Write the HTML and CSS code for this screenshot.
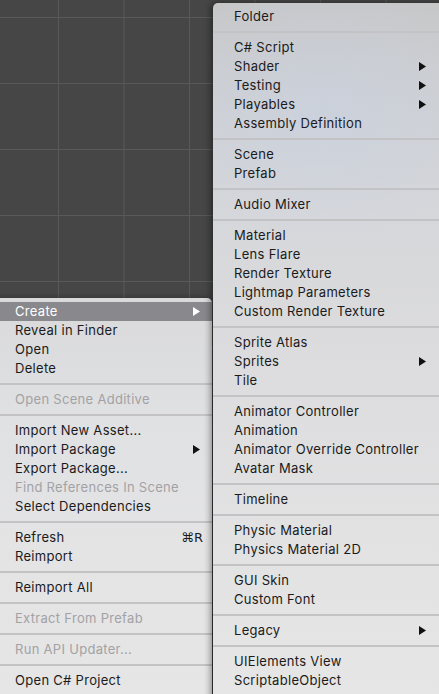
FILE: index.html
```html
<!DOCTYPE html>
<html>
<head>
<meta charset="utf-8">
<link rel="stylesheet" href="styles.css">
</head>
<body>
<div class="scene">
  <div class="menu menu-left">
    <div class="item active"><span>Create</span><svg class="arrow" viewBox="0 0 7 9"><polygon points="0,0 7,4.5 0,9"/></svg></div>
    <div class="item"><span>Reveal in Finder</span></div>
    <div class="item"><span>Open</span></div>
    <div class="item"><span>Delete</span></div>
    <div class="sep"></div>
    <div class="item disabled"><span>Open Scene Additive</span></div>
    <div class="sep"></div>
    <div class="item"><span>Import New Asset...</span></div>
    <div class="item"><span>Import Package</span><svg class="arrow" viewBox="0 0 7 9"><polygon points="0,0 7,4.5 0,9"/></svg></div>
    <div class="item"><span>Export Package...</span></div>
    <div class="item disabled"><span>Find References In Scene</span></div>
    <div class="item"><span>Select Dependencies</span></div>
    <div class="sep"></div>
    <div class="item"><span>Refresh</span><span class="shortcut">⌘R</span></div>
    <div class="item"><span>Reimport</span></div>
    <div class="sep"></div>
    <div class="item"><span>Reimport All</span></div>
    <div class="sep"></div>
    <div class="item disabled"><span>Extract From Prefab</span></div>
    <div class="sep"></div>
    <div class="item disabled"><span>Run API Updater...</span></div>
    <div class="sep"></div>
    <div class="item"><span>Open C# Project</span></div>
  </div>
  <div class="menu menu-right">
    <div class="item"><span>Folder</span></div>
    <div class="sep"></div>
    <div class="item"><span>C# Script</span></div>
    <div class="item"><span>Shader</span><svg class="arrow" viewBox="0 0 7 9"><polygon points="0,0 7,4.5 0,9"/></svg></div>
    <div class="item"><span>Testing</span><svg class="arrow" viewBox="0 0 7 9"><polygon points="0,0 7,4.5 0,9"/></svg></div>
    <div class="item"><span>Playables</span><svg class="arrow" viewBox="0 0 7 9"><polygon points="0,0 7,4.5 0,9"/></svg></div>
    <div class="item"><span>Assembly Definition</span></div>
    <div class="sep"></div>
    <div class="item"><span>Scene</span></div>
    <div class="item"><span>Prefab</span></div>
    <div class="sep"></div>
    <div class="item"><span>Audio Mixer</span></div>
    <div class="sep"></div>
    <div class="item"><span>Material</span></div>
    <div class="item"><span>Lens Flare</span></div>
    <div class="item"><span>Render Texture</span></div>
    <div class="item"><span>Lightmap Parameters</span></div>
    <div class="item"><span>Custom Render Texture</span></div>
    <div class="sep"></div>
    <div class="item"><span>Sprite Atlas</span></div>
    <div class="item"><span>Sprites</span><svg class="arrow" viewBox="0 0 7 9"><polygon points="0,0 7,4.5 0,9"/></svg></div>
    <div class="item"><span>Tile</span></div>
    <div class="sep"></div>
    <div class="item"><span>Animator Controller</span></div>
    <div class="item"><span>Animation</span></div>
    <div class="item"><span>Animator Override Controller</span></div>
    <div class="item"><span>Avatar Mask</span></div>
    <div class="sep"></div>
    <div class="item"><span>Timeline</span></div>
    <div class="sep"></div>
    <div class="item"><span>Physic Material</span></div>
    <div class="item"><span>Physics Material 2D</span></div>
    <div class="sep"></div>
    <div class="item"><span>GUI Skin</span></div>
    <div class="item"><span>Custom Font</span></div>
    <div class="sep"></div>
    <div class="item"><span>Legacy</span><svg class="arrow" viewBox="0 0 7 9"><polygon points="0,0 7,4.5 0,9"/></svg></div>
    <div class="sep"></div>
    <div class="item"><span>UIElements View</span></div>
    <div class="item"><span>ScriptableObject</span></div>
  </div>
</div>
</body>
</html>
```
FILE: styles.css
```css
html, body {
  margin: 0;
  padding: 0;
  width: 439px;
  height: 694px;
  overflow: hidden;
}
body {
  font-family: "Inter", "Liberation Sans", sans-serif;
  font-size: 13px;
  letter-spacing: 0.3px;
  color: #1b1b1b;
}
.scene {
  position: relative;
  width: 439px;
  height: 694px;
  background-color: #464646;
  background-image:
    linear-gradient(to right, #595959 1px, transparent 1px),
    linear-gradient(to bottom, #595959 1px, transparent 1px);
  background-size: 65.5px 66px;
  background-position: 58px 17px;
  overflow: hidden;
}
.menu {
  position: absolute;
  box-sizing: border-box;
  padding: 4px 0;
  border-radius: 5px;
}
.menu-left {
  left: -6px;
  top: 298px;
  width: 218px;
  height: 420px;
  background: linear-gradient(to bottom, #d9d9da 0%, #e0e1e3 30%, #e4e4e5 60%, #e6e6e6 100%);
  box-shadow: 0 0 6px rgba(0,0,0,0.35);
}
.menu-right {
  left: 213px;
  top: 3px;
  width: 240px;
  height: 700px;
  background:
    radial-gradient(ellipse 180px 140px at 110px 110px, rgba(200,210,228,0.55), rgba(200,210,228,0) 100%),
    linear-gradient(to bottom, #c7c7c8 0%, #cfd0d2 15%, #d6d7da 30%, #dcdcde 50%, #e2e2e3 75%, #e6e6e6 100%);
  box-shadow: -2px 0 7px rgba(0,0,0,0.45);
}
.item {
  height: 19px;
  line-height: 19px;
  display: flex;
  align-items: center;
  justify-content: space-between;
  white-space: nowrap;
}
.menu-left .item {
  padding: 0 12px 0 21px;
}
.menu-right .item {
  padding: 0 27px 0 21px;
}
.item.active {
  background: #88888d;
  color: #ffffff;
}
.item.active .arrow {
  fill: #ffffff;
}
.item.disabled {
  color: #a2a2a4;
}
.arrow {
  width: 7px;
  height: 9px;
  fill: #111111;
  flex: none;
}
.shortcut {
  font-family: "DejaVu Sans", "Inter", sans-serif;
  font-size: 13px;
  letter-spacing: 0;
  margin-right: -3px;
}
.sep {
  height: 12px;
  display: flex;
  align-items: center;
}
.sep::before {
  content: "";
  display: block;
  width: 100%;
  height: 2px;
  background: #c3c3c5;
}
```
